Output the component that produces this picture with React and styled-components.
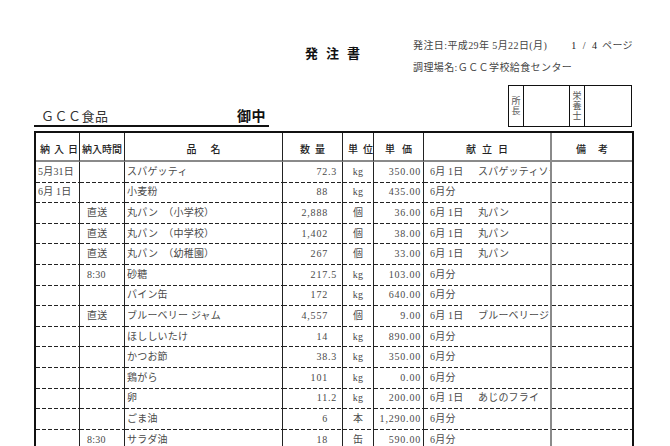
import React from 'react'
import styled, { createGlobalStyle } from 'styled-components'

const FONT = `"Liberation Serif", "Noto Sans CJK JP", serif`

const GlobalStyle = createGlobalStyle`
  html, body {
    margin: 0;
    padding: 0;
    background: #fff;
  }
  body {
    font-family: ${FONT};
    color: #333;
  }
`

const columns = [
  { label: '納入日', sp: 4, width: 44 },
  { label: '納入時間', sp: 0, width: 45 },
  { label: '品名', sp: 14, width: 158 },
  { label: '数量', sp: 5, width: 60 },
  { label: '単位', sp: 5, width: 31 },
  { label: '単価', sp: 7, width: 50 },
  { label: '献立日', sp: 6, width: 128 },
  { label: '備考', sp: 12, width: 80 }
]

const rows = [
  { day: '5月31日', time: '', name: 'スパゲッティ', qty: ['72', '.3'], unit: 'kg', price: '350.00', menu: ['6月 1日', 'スパゲッティソース'] },
  { day: '6月 1日', time: '', name: '小麦粉', qty: ['88', ''], unit: 'kg', price: '435.00', menu: ['6月分'] },
  { day: '', time: '直送', name: '丸パン　（小学校）', qty: ['2,888', ''], unit: '個', price: '36.00', menu: ['6月 1日', '丸パン'] },
  { day: '', time: '直送', name: '丸パン　（中学校）', qty: ['1,402', ''], unit: '個', price: '38.00', menu: ['6月 1日', '丸パン'] },
  { day: '', time: '直送', name: '丸パン　（幼稚園）', qty: ['267', ''], unit: '個', price: '33.00', menu: ['6月 1日', '丸パン'] },
  { day: '', time: '8:30', name: '砂糖', qty: ['217', '.5'], unit: 'kg', price: '103.00', menu: ['6月分'] },
  { day: '', time: '', name: 'パイン缶', qty: ['172', ''], unit: 'kg', price: '640.00', menu: ['6月分'] },
  { day: '', time: '直送', name: 'ブルーベリー ジャム', qty: ['4,557', ''], unit: '個', price: '9.00', menu: ['6月 1日', 'ブルーベリージャム'] },
  { day: '', time: '', name: 'ほししいたけ', qty: ['14', ''], unit: 'kg', price: '890.00', menu: ['6月分'] },
  { day: '', time: '', name: 'かつお節', qty: ['38', '.3'], unit: 'kg', price: '350.00', menu: ['6月分'] },
  { day: '', time: '', name: '鶏がら', qty: ['101', ''], unit: 'kg', price: '0.00', menu: ['6月分'] },
  { day: '', time: '', name: '卵', qty: ['11', '.2'], unit: 'kg', price: '200.00', menu: ['6月 1日', 'あじのフライ'] },
  { day: '', time: '', name: 'ごま油', qty: ['6', ''], unit: '本', price: '1,290.00', menu: ['6月分'] },
  { day: '', time: '8:30', name: 'サラダ油', qty: ['18', ''], unit: '缶', price: '590.00', menu: ['6月分'] }
]

const App = () => (
  <>
    <GlobalStyle />
    <Page>
      <Head>
        <Title>発注書</Title>
        <Info>
          <InfoLine>
            <span>発注日:平成29年 5月22日(月)</span>
            <PageNo>
              <Wide>1 / 4</Wide> ページ
            </PageNo>
          </InfoLine>
          <InfoLine>調理場名:ＧＣＣ学校給食センター</InfoLine>
        </Info>
      </Head>

      <Address>
        <Client>
          <span>ＧＣＣ食品</span>
          <Honorific>御中</Honorific>
        </Client>
        <Stamps>
          <StampLabel>
            <span>所</span>
            <span>長</span>
          </StampLabel>
          <StampSpace />
          <StampLabel>
            <span>栄</span>
            <span>養</span>
            <span>士</span>
          </StampLabel>
          <StampSpace />
        </Stamps>
      </Address>

      <Sheet>
        <colgroup>
          {columns.map(c => (
            <col key={c.label} style={{ width: c.width }} />
          ))}
        </colgroup>
        <thead>
          <tr>
            {columns.map(c => (
              <HeadCell key={c.label} $sp={c.sp}>
                {c.label}
              </HeadCell>
            ))}
          </tr>
        </thead>
        <tbody>
          {rows.map((r, i) => (
            <tr key={i}>
              <Cell $pl={2}>{r.day}</Cell>
              <Cell $pl={7}>{r.time}</Cell>
              <Cell $pl={2}>{r.name}</Cell>
              <Cell $align="right" $pr={2} $num>
                {r.qty[0]}
                <Frac>{r.qty[1]}</Frac>
              </Cell>
              <Cell $align="center">{r.unit}</Cell>
              <Cell $align="right" $pr={2} $num>
                {r.price}
              </Cell>
              <Cell $pl={6} $divider>
                <MenuDate>{r.menu[0]}</MenuDate>
                {r.menu[1]}
              </Cell>
              <Cell $last />
            </tr>
          ))}
        </tbody>
      </Sheet>
    </Page>
  </>
)

const Page = styled.div`
  width: 670px;
  box-sizing: border-box;
  padding: 0 36px 0 34px;
`

const Head = styled.header`
  display: flex;
  align-items: flex-start;
  padding-top: 40px;
`

const Title = styled.h1`
  margin: 7px 0 0 271px;
  width: 108px;
  font-size: 13px;
  line-height: 14px;
  font-weight: 700;
  letter-spacing: 8px;
  color: #111;
`

const Info = styled.div`
  flex: 1;
  font-size: 10px;
  line-height: 12px;
  letter-spacing: 0.4px;
  color: #444;
  display: flex;
  flex-direction: column;
  gap: 10px;
`

const InfoLine = styled.div`
  display: flex;
  white-space: nowrap;
`

const PageNo = styled.span`
  margin-left: auto;
  margin-right: 1px;
`

const Wide = styled.span`
  letter-spacing: 2px;
  color: #222;
`

const Address = styled.div`
  display: flex;
  align-items: flex-end;
  margin-top: 11px;
`

const Client = styled.div`
  width: 235px;
  display: flex;
  align-items: baseline;
  border-bottom: 2px solid #111;
  padding: 0 3px 0 7px;
  box-sizing: border-box;
  font-size: 13px;
  line-height: 16px;
  color: #333;
  letter-spacing: 0.5px;
`

const Honorific = styled.span`
  margin-left: auto;
  font-size: 14px;
  font-weight: 700;
  color: #111;
`

const Stamps = styled.div`
  margin-left: auto;
  margin-right: 2px;
  display: grid;
  grid-template-columns: 15px 46px 15px 46px;
  height: 42px;
  border: 1px solid #111;
  box-sizing: border-box;
`

const StampLabel = styled.div`
  display: flex;
  flex-direction: column;
  align-items: center;
  justify-content: center;
  font-size: 9px;
  line-height: 10px;
  color: #555;
  border-right: 1px solid #111;
`

const StampSpace = styled.div`
  &:not(:last-child) {
    border-right: 1px solid #111;
  }
`

const Sheet = styled.table`
  margin-top: 4px;
  width: 600px;
  table-layout: fixed;
  border-collapse: separate;
  border-spacing: 0;
  border: 2px solid #111;
`

const HeadCell = styled.th`
  height: 29px;
  box-sizing: border-box;
  padding: 0 0 4px ${p => p.$sp}px;
  vertical-align: bottom;
  text-align: center;
  font-size: 10px;
  line-height: 12px;
  font-weight: 500;
  letter-spacing: ${p => p.$sp}px;
  color: #222;
  white-space: nowrap;
  border-bottom: 2px solid #8a8a8a;
  border-right: 1px solid #222;

  &:nth-child(7) {
    border-right: 2px solid #8a8a8a;
  }
  &:last-child {
    border-right: none;
  }
`

const Cell = styled.td`
  height: 20.6px;
  box-sizing: border-box;
  padding: 0 ${p => p.$pr || 0}px 1px ${p => p.$pl || 0}px;
  text-align: ${p => p.$align || 'left'};
  vertical-align: middle;
  font-size: 10px;
  line-height: 12px;
  letter-spacing: ${p => (p.$num ? '0.8px' : '0.2px')};
  color: #4a4a4a;
  white-space: nowrap;
  overflow: hidden;
  border-right: ${p =>
    p.$last ? 'none' : p.$divider ? '2px solid #8a8a8a' : '1px solid #222'};
  background: linear-gradient(to right, #222 4px, transparent 4px) left
    bottom / 6px 1px repeat-x;

  tr:last-child > & {
    background: none;
  }
`

const Frac = styled.span`
  display: inline-block;
  width: 12px;
  text-align: left;
`

const MenuDate = styled.span`
  display: inline-block;
  width: 48px;
`

export default App
